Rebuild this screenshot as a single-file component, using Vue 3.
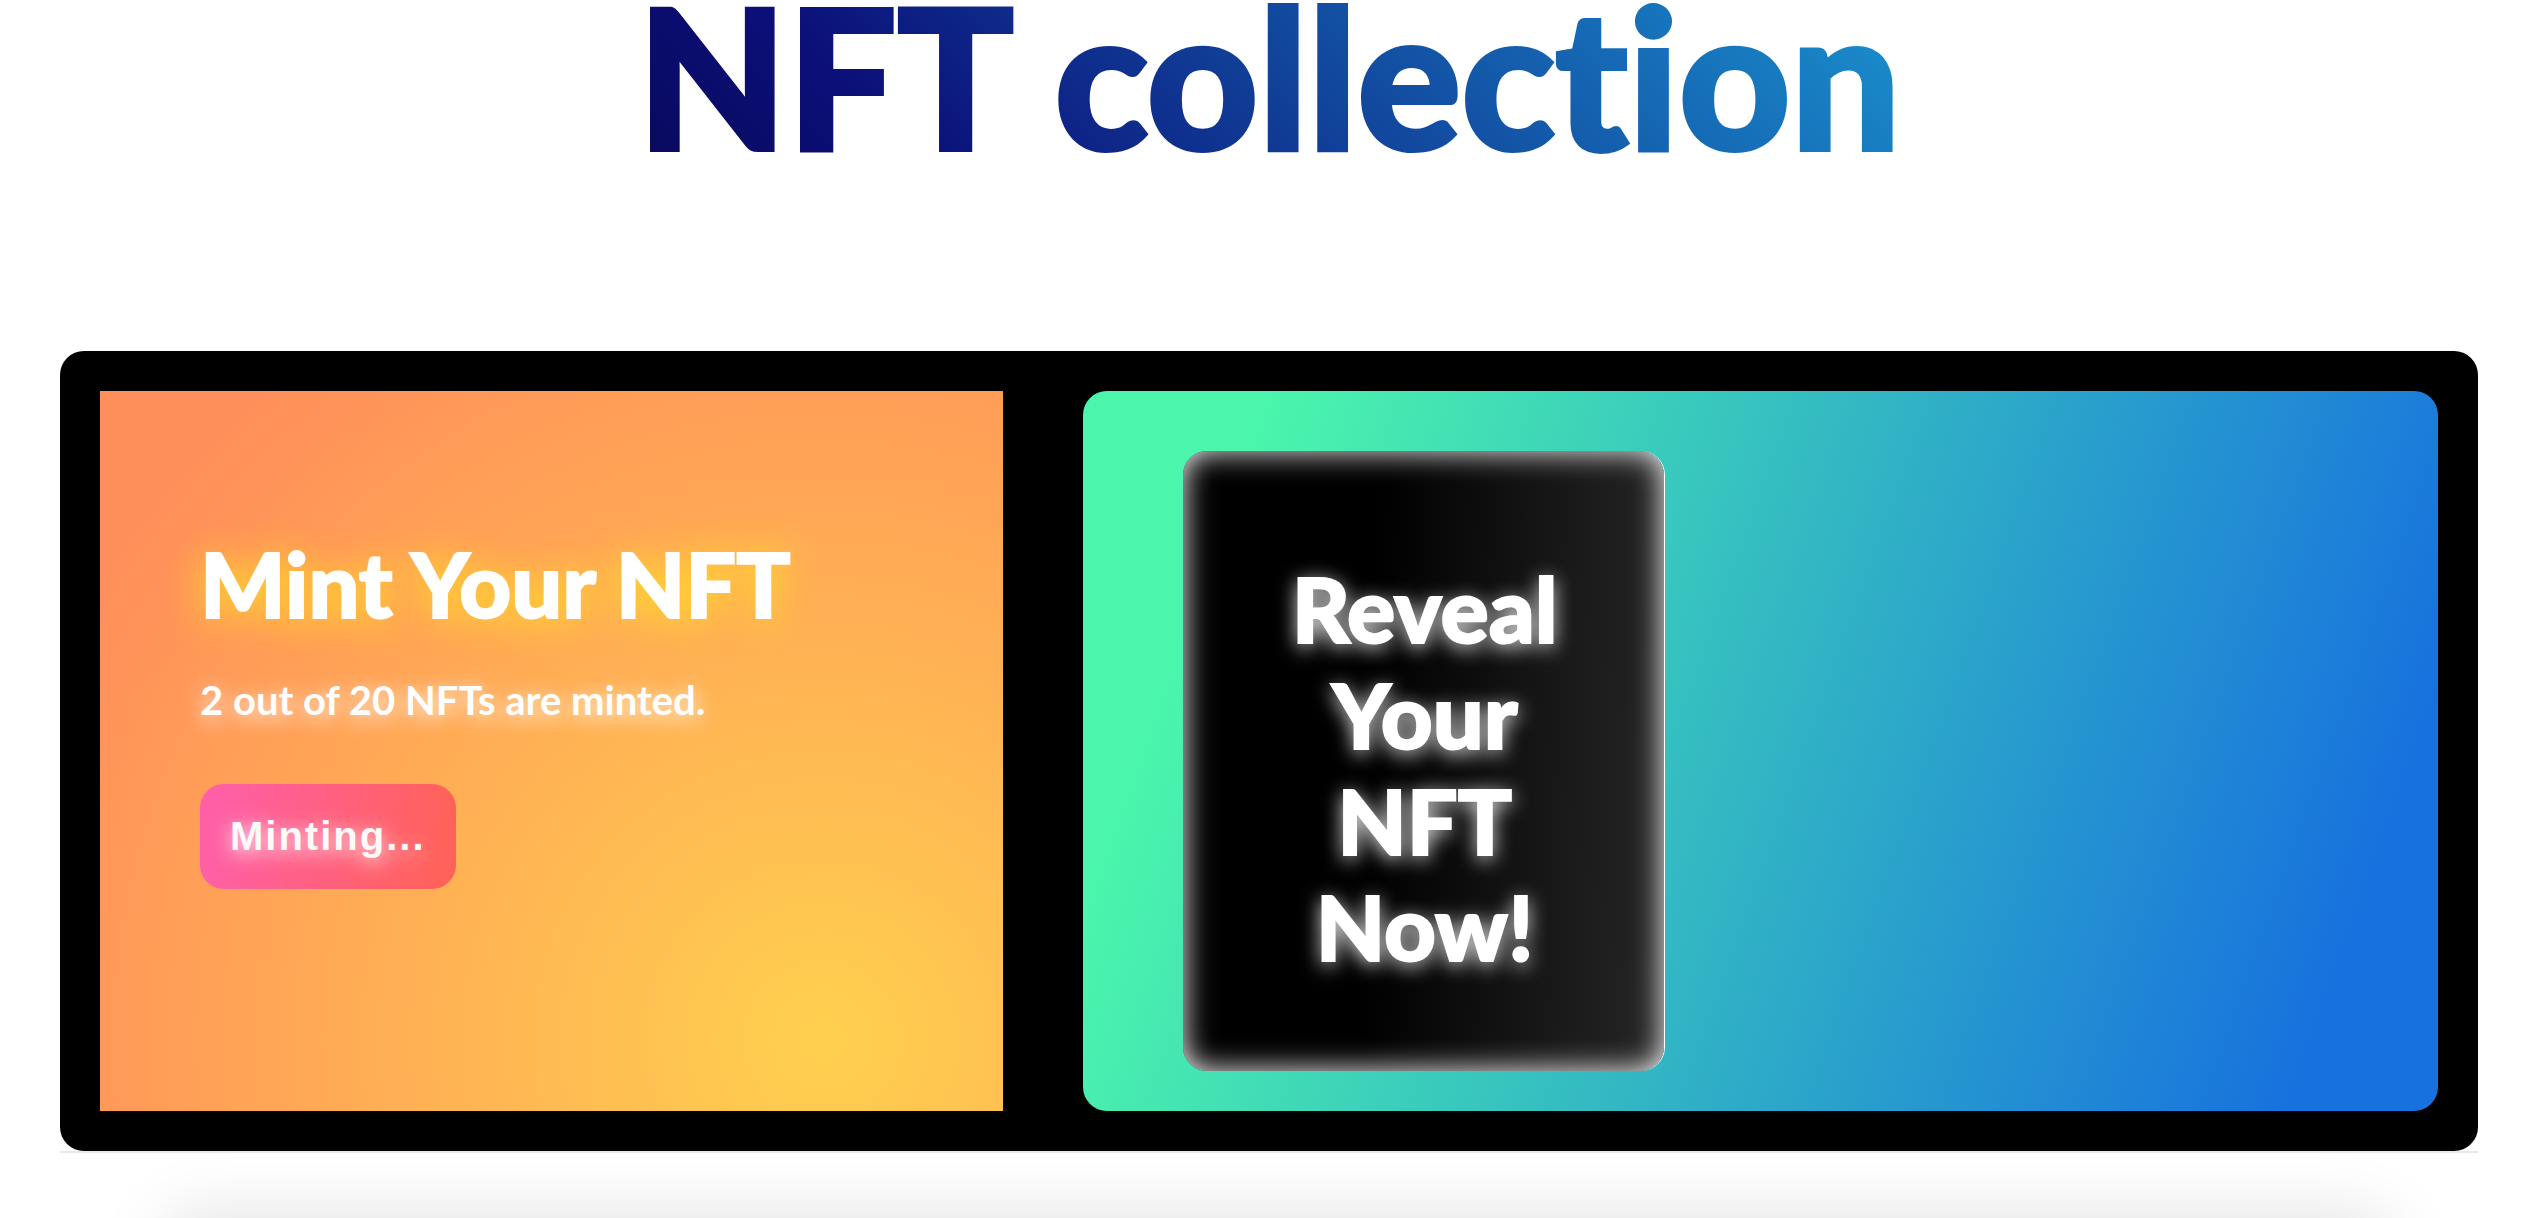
<script setup>
import { ref } from 'vue'

const minted = ref(2)
const supply = ref(20)
const isMinting = ref(true)
</script>

<template>
  <main class="page">
    <h1 class="title">NFT collection</h1>

    <section class="board">
      <div class="panel mint">
        <h2 class="heading mint-heading">Mint Your NFT</h2>
        <p class="status">{{ minted }} out of {{ supply }} NFTs are minted.</p>
        <button class="mint-button" type="button">{{ isMinting ? 'Minting...' : 'Mint' }}</button>
      </div>
      <div class="panel reveal">
        <div class="reveal-card">
          <h2 class="heading reveal-heading">Reveal Your NFT Now!</h2>
        </div>
      </div>
    </section>

    <hr class="divider" />
    <div class="below">
      <div class="sheet"></div>
    </div>
  </main>
</template>

<style>
body {
  margin: 0;
  background: #fff;
}
</style>

<style scoped>
.page {
  padding: 0 54px 0 60px;
  font-family: Lato, "Liberation Sans", sans-serif;
  font-variant-ligatures: none;
}

.title {
  margin: 0 0 161px;
  padding-bottom: 40px;
  font-size: 194px;
  font-weight: 900;
  line-height: 150px;
  text-align: center;
  color: transparent;
  -webkit-text-stroke: 4px transparent;
  background: linear-gradient(45deg, #040024 0%, #0b0f78 34%, #22d2fa 100%);
  -webkit-background-clip: text;
  background-clip: text;
}

.board {
  display: grid;
  grid-template-columns: 2fr 3fr;
  gap: 80px;
  padding: 40px;
  border-radius: 24px;
  background: #000;
}

.panel {
  box-sizing: border-box;
  min-height: 720px;
}

.mint {
  display: flex;
  flex-direction: column;
  align-items: flex-start;
  padding: 139px 100px 100px;
  background: radial-gradient(circle at 80% 90%, #ffd04f 0%, #ff8f5a 88%);
}

.heading {
  margin: 0;
  font-size: 90px;
  font-weight: 900;
  line-height: 106px;
  color: #fff;
  -webkit-text-stroke: 2px #fff;
}

.mint-heading {
  text-shadow: 0 4px 36px #ffea20;
}

.status {
  margin: 40px 0 60px;
  font-size: 40px;
  font-weight: 700;
  line-height: 48px;
  color: #fff;
  text-shadow: 0 4px 20px #fff;
}

.mint-button {
  padding: 30px;
  border: 0;
  border-radius: 24px;
  font-family: "Liberation Sans", Arial, sans-serif;
  font-size: 40px;
  font-weight: 700;
  line-height: 45px;
  letter-spacing: 2px;
  color: #fffafa;
  text-shadow: 0 4px 20px #fff;
  background: linear-gradient(100deg, #ff5fa5 8%, #ff625b 92%);
}

.reveal {
  padding: 60px 100px 40px;
  border-radius: 24px;
  background: linear-gradient(109.6deg, #4bf6ac 11.2%, #1771de 91.1%);
}

.reveal-card {
  box-sizing: border-box;
  width: 481px;
  min-height: 620px;
  padding: 104px 98px 90px 100px;
  border-radius: 24px;
  background: linear-gradient(92deg, #000 39%, #272727 100%);
  box-shadow: inset 0 0 30px #fff, 1px 0 0 #fff;
}

.reveal-heading {
  text-align: center;
  text-shadow: 0 4px 20px #fff;
}

.divider {
  height: 2px;
  margin: 0;
  border: 0;
  background: #e8e8e8;
}

.below {
  height: 65px;
  overflow: hidden;
}

.sheet {
  height: 200px;
  margin: 65px 90px 0 106px;
  border-radius: 24px;
  box-shadow: 0 0 70px rgba(0, 0, 0, 0.13);
}
</style>
